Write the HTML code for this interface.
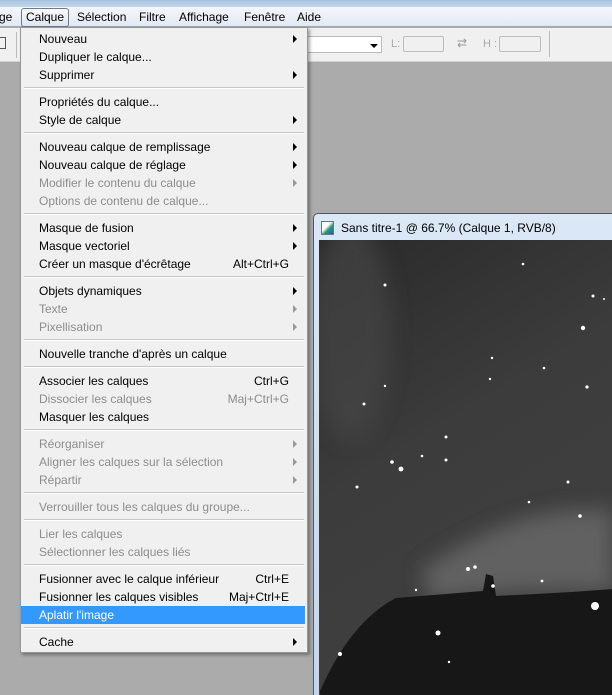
<!DOCTYPE html>
<html style="overflow:hidden;width:612px;height:695px"><head><meta charset="utf-8"><style>
*{margin:0;padding:0;box-sizing:border-box}
body{width:612px;height:695px;overflow:hidden;background:#ababab;font-family:"Liberation Sans",sans-serif;font-size:12px;position:relative}
#top{position:absolute;left:0;top:0;width:612px;height:7px;background:linear-gradient(#a9c3e0,#c4d6ea)}
#mb{position:absolute;left:0;top:7px;width:612px;height:20px;background:linear-gradient(#f4f6fb,#e3e8f2);border-bottom:1px solid #a0a8b8}
#mb span{position:absolute;top:3px;color:#000}
#cq{position:absolute;left:21px;top:1px;width:48px;height:19px;border:1px solid #6e7890;border-radius:3px;background:linear-gradient(#fafbfd,#dfe4ee)}
#tb{position:absolute;left:0;top:28px;width:612px;height:34px;background:#f0f0f0;border-bottom:1px solid #d0d0d0}
#menu{position:absolute;left:20px;top:27px;width:288px;height:626px;background:#f0f0f0;border:1px solid #979797;box-shadow:2px 2px 3px rgba(0,0,0,.35)}
.it{position:absolute;left:0;width:284px;height:18px;line-height:18px;padding-left:18px;color:#000;margin-top:1px}
.d{color:#8d8d8d}
.sc{position:absolute;right:16px;top:0}
.ar{position:absolute;right:8px;top:5px;width:0;height:0;border-left:4px solid #000;border-top:4px solid transparent;border-bottom:4px solid transparent}
.d .ar{border-left-color:#999}
.sep{position:absolute;left:3px;width:280px;height:2px;border-top:1px solid #c5c5c5;border-bottom:1px solid #fff;margin-top:1px}
.hl{background:#3399ff;color:#fff}
#doc{position:absolute;left:313px;top:213px;width:299px;height:482px;background:linear-gradient(#dbe8f6,#c2d6ec);border:1px solid #4a5a6e;border-right:none;border-bottom:none;border-radius:5px 0 0 0;overflow:hidden}
</style></head><body>
<div id="top"></div>
<div id="mb"><div id="cq"></div>
<span style="left:-1px">ge</span><span style="left:26px">Calque</span><span style="left:77px">Sélection</span><span style="left:139px">Filtre</span><span style="left:179px">Affichage</span><span style="left:244px">Fenêtre</span><span style="left:297px">Aide</span></div>
<div id="tb">
<div style="position:absolute;left:0;top:9px;width:6px;height:12px;border:1px solid #555;border-left:none"></div>
<div style="position:absolute;left:16px;top:4px;width:1px;height:26px;background:#bbb"></div>
<div style="position:absolute;left:306px;top:8px;width:76px;height:17px;background:#fff;border:1px solid #bbb"></div>
<div style="position:absolute;left:370px;top:16px;border-top:4px solid #000;border-left:4px solid transparent;border-right:4px solid transparent"></div>
<span style="position:absolute;left:391px;top:10px;color:#aaa;font-size:11px">L:</span>
<div style="position:absolute;left:403px;top:8px;width:41px;height:16px;border:1px solid #bbb;border-radius:2px"></div>
<span style="position:absolute;left:457px;top:8px;color:#999;font-size:12px">⇄</span>
<span style="position:absolute;left:483px;top:10px;color:#aaa;font-size:11px">H :</span>
<div style="position:absolute;left:499px;top:8px;width:42px;height:16px;border:1px solid #bbb;border-radius:2px"></div>
<div style="position:absolute;left:549px;top:3px;width:1px;height:26px;background:#bbb"></div>
</div>
<div id="doc">
<div style="position:absolute;left:7px;top:7px;width:13px;height:14px;background:linear-gradient(135deg,#fff 40%,#2a9a7a 60%,#1e5fb0);border:1px solid #678"></div>
<span style="position:absolute;left:27px;top:7px;color:#000">Sans titre-1 @ 66.7% (Calque 1, RVB/8)</span>
<svg style="position:absolute;left:5px;top:26px" width="300" height="460" viewBox="318 239 300 460">
<defs>
<linearGradient id="g1" x1="0" y1="0" x2="0.4" y2="1"><stop offset="0" stop-color="#2a2a2a"/><stop offset=".5" stop-color="#3c3c3c"/><stop offset="1" stop-color="#404040"/></linearGradient>
<filter id="bl" x="-50%" y="-50%" width="200%" height="200%"><feGaussianBlur stdDeviation="10"/></filter>
</defs>
<rect x="318" y="239" width="300" height="460" fill="url(#g1)"/>
<ellipse cx="350" cy="330" rx="40" ry="110" fill="#4a4a4a" opacity=".6" filter="url(#bl)"/>
<path d="M420 570 Q520 500 612 510 L612 590 Q520 585 430 600 Z" fill="#6a6a6a" opacity=".8" filter="url(#bl)"/>
<path d="M319 699 L319 690 Q350 620 395 597 L482 590 L485 573 L492 575 L495 595 Q560 592 612 588 L612 699 Z" fill="#171717"/>
<g fill="#fff">
<circle cx="384" cy="284" r="1.5"/><circle cx="522" cy="263" r="1.3"/><circle cx="592" cy="295" r="1.5"/><circle cx="603" cy="298" r="1"/><circle cx="582" cy="327" r="2.2"/><circle cx="491" cy="357" r="1.2"/><circle cx="543" cy="367" r="1.3"/><circle cx="586" cy="386" r="1.6"/><circle cx="363" cy="403" r="1.5"/><circle cx="489" cy="378" r="1.2"/><circle cx="391" cy="461" r="1.8"/><circle cx="400" cy="468" r="2.4"/><circle cx="356" cy="486" r="1.5"/><circle cx="445" cy="436" r="1.5"/><circle cx="445" cy="459" r="1.5"/><circle cx="567" cy="481" r="1.5"/><circle cx="579" cy="515" r="1.8"/><circle cx="528" cy="501" r="1.3"/><circle cx="467" cy="568" r="2"/><circle cx="474" cy="566" r="1.8"/><circle cx="492" cy="585" r="1.8"/><circle cx="541" cy="580" r="1.4"/><circle cx="594" cy="605" r="4"/><circle cx="437" cy="632" r="2.5"/><circle cx="339" cy="653" r="2"/><circle cx="448" cy="661" r="1.2"/><circle cx="415" cy="589" r="1.2"/><circle cx="384" cy="385" r="1.2"/><circle cx="421" cy="455" r="1.3"/>
</g></svg>
</div>
<div id="menu">
<div class="it" style="top:1px">Nouveau<i class="ar"></i></div>
<div class="it" style="top:19px">Dupliquer le calque...</div>
<div class="it" style="top:37px">Supprimer<i class="ar"></i></div>
<div class="sep" style="top:58px"></div>
<div class="it" style="top:64px">Propriétés du calque...</div>
<div class="it" style="top:82px">Style de calque<i class="ar"></i></div>
<div class="sep" style="top:103px"></div>
<div class="it" style="top:109px">Nouveau calque de remplissage<i class="ar"></i></div>
<div class="it" style="top:127px">Nouveau calque de réglage<i class="ar"></i></div>
<div class="it d" style="top:145px">Modifier le contenu du calque<i class="ar"></i></div>
<div class="it d" style="top:163px">Options de contenu de calque...</div>
<div class="sep" style="top:184px"></div>
<div class="it" style="top:190px">Masque de fusion<i class="ar"></i></div>
<div class="it" style="top:208px">Masque vectoriel<i class="ar"></i></div>
<div class="it" style="top:226px">Créer un masque d'écrêtage<span class="sc">Alt+Ctrl+G</span></div>
<div class="sep" style="top:247px"></div>
<div class="it" style="top:253px">Objets dynamiques<i class="ar"></i></div>
<div class="it d" style="top:271px">Texte<i class="ar"></i></div>
<div class="it d" style="top:289px">Pixellisation<i class="ar"></i></div>
<div class="sep" style="top:310px"></div>
<div class="it" style="top:316px">Nouvelle tranche d'après un calque</div>
<div class="sep" style="top:337px"></div>
<div class="it" style="top:343px">Associer les calques<span class="sc">Ctrl+G</span></div>
<div class="it d" style="top:361px">Dissocier les calques<span class="sc">Maj+Ctrl+G</span></div>
<div class="it" style="top:379px">Masquer les calques</div>
<div class="sep" style="top:400px"></div>
<div class="it d" style="top:406px">Réorganiser<i class="ar"></i></div>
<div class="it d" style="top:424px">Aligner les calques sur la sélection<i class="ar"></i></div>
<div class="it d" style="top:442px">Répartir<i class="ar"></i></div>
<div class="sep" style="top:463px"></div>
<div class="it d" style="top:469px">Verrouiller tous les calques du groupe...</div>
<div class="sep" style="top:490px"></div>
<div class="it d" style="top:496px">Lier les calques</div>
<div class="it d" style="top:514px">Sélectionner les calques liés</div>
<div class="sep" style="top:535px"></div>
<div class="it" style="top:541px">Fusionner avec le calque inférieur<span class="sc">Ctrl+E</span></div>
<div class="it" style="top:559px">Fusionner les calques visibles<span class="sc">Maj+Ctrl+E</span></div>
<div class="it hl" style="top:577px">Aplatir l'image</div>
<div class="sep" style="top:598px"></div>
<div class="it" style="top:604px">Cache<i class="ar"></i></div>
</div>
</body></html>
